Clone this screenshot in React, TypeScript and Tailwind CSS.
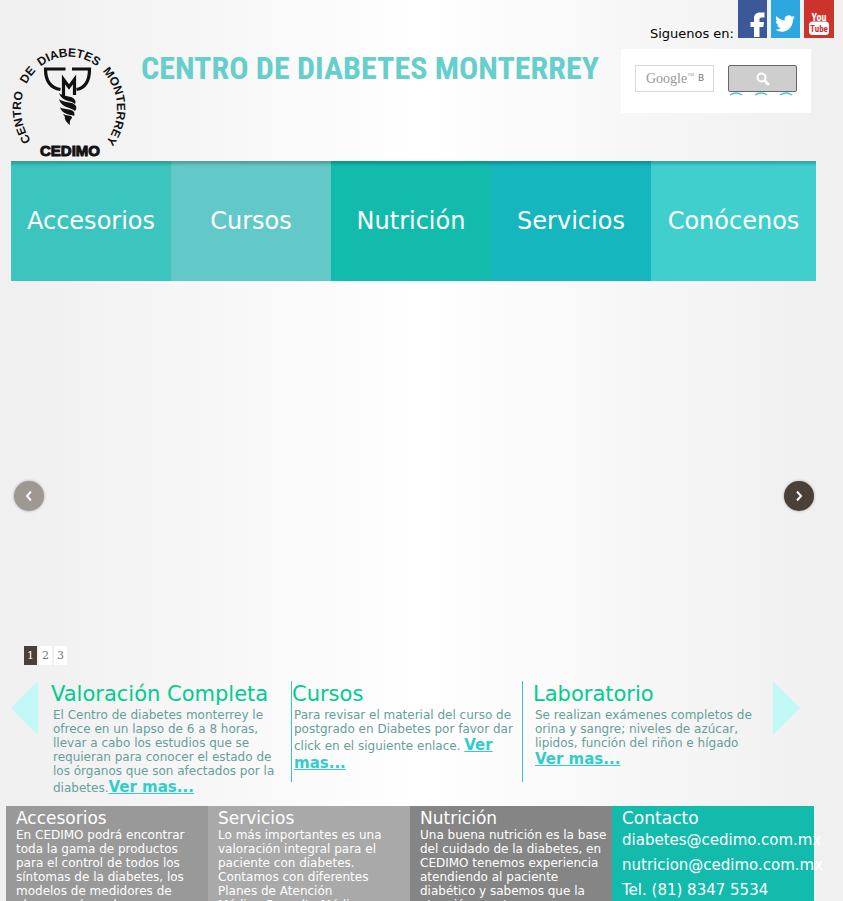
import React from "react";

const sections = [
  { name: "Accesorios", tone: "bg-[#3cc4be]" },
  { name: "Cursos", tone: "bg-[#63c9c8]" },
  { name: "Nutrición", tone: "bg-[#13bbac]" },
  { name: "Servicios", tone: "bg-[#15b6bd]" },
  { name: "Conócenos", tone: "bg-[#40cfcd]" },
];

const footer = [
  {
    title: "Accesorios",
    tone: "bg-[#999999]",
    text: "En CEDIMO podrá encontrar toda la gama de productos para el control de todos los síntomas de la diabetes, los modelos de medidores de glucosa más cada vez",
  },
  {
    title: "Servicios",
    tone: "bg-[#a9a9a9]",
    text: "Lo más importantes es una valoración integral para el paciente con diabetes. Contamos con diferentes Planes de Atención\nMédica Consulta Médica",
  },
  {
    title: "Nutrición",
    tone: "bg-[#858585]",
    text: "Una buena nutrición es la base del cuidado de la diabetes, en CEDIMO tenemos experiencia atendiendo al paciente diabético y sabemos que la atención oportuna",
  },
];

const ringWords = [
  { word: "CENTRO", at: 3 },
  { word: "DE", at: 62 },
  { word: "DIABETES", at: 85 },
  { word: "MONTERREY", at: 153 },
];

function Logo() {
  return (
    <svg viewBox="0 0 120 120" className="h-[120px] w-[120px] overflow-visible" role="img" aria-label="CEDIMO">
      <defs>
        <path id="ring" d="M24 102A48 52 0 1 1 96 102" />
      </defs>
      {ringWords.map((w) => (
        <text key={w.word} className="font-['Liberation_Sans'] text-[12px] font-bold" fill="#111">
          <textPath href="#ring" startOffset={w.at}>{w.word}</textPath>
        </text>
      ))}
      <g fill="none" stroke="#111" strokeWidth="3.200">
        <path d="M56.500 28H36.500C36.500 40 42 47 51.500 48.500" />
        <path d="M63 28H80.500C80.500 40 76 47 67.500 48.500" />
        <path d="M54.500 56V38.500L60 46L65.500 38.500V54" />
      </g>
      <g fill="#111">
        <path d="M50 52C54 56 63 54 66 59C67 61 66 63 66 63C62 59 53 61 50 52Z" />
        <path d="M50 58C54 62 64 60 67 65C68 68 66 70 66 70C62 66 52 67 50 58Z" />
        <path d="M51 66C54 69 62 67 65 71C66 73 65 75 65 75C61 73 53 74 51 66Z" />
        <path d="M54 73C57 75 62 74 63 76C63 78 60 79 61 84C58 82 55 78 56 76Z" />
      </g>
      <text x="61" y="115" textAnchor="middle" className="font-['Liberation_Sans'] text-[15px] font-bold" fill="#111" stroke="#111" strokeWidth="1">CEDIMO</text>
    </svg>
  );
}

function Social() {
  return (
    <div className="flex h-[38px] gap-[4px]">
      <span className="pt-[26px] text-[13px] leading-4">Siguenos en:</span>
      <a href="#facebook" aria-label="Facebook">
        <svg viewBox="0 0 29 38" className="h-[38px] w-[29px]">
          <path fill="#3b5998" d="M0 0h29v38H0z" />
          <path fill="#fff" d="M16 37V27h-3.500v-5H16v-3.500c0-4 2.500-6 6-6h4.500v5h-3c-1.500 0-2 .7-2 2V22H26l-.7 5h-3.800v10z" />
        </svg>
      </a>
      <a href="#twitter" aria-label="Twitter">
        <svg viewBox="0 0 29 38" className="h-[38px] w-[29px]">
          <path fill="#2ca7df" d="M0 0h29v38H0z" />
          <path fill="#fff" d="M24 17.200c-.8.400-1.600.6-2.300.7.800-.5 1.400-1.300 1.700-2.200-.8.500-1.700.8-2.600 1a4.100 4.100 0 0 0-7 3.700c-3.400-.2-6.400-1.800-8.400-4.300-1.100 1.900-.6 4.300 1.300 5.500-.7 0-1.300-.2-1.900-.5 0 2 1.400 3.700 3.300 4.100-.6.200-1.200.2-1.900.1.500 1.600 2 2.800 3.900 2.800A8.200 8.200 0 0 1 4.500 29.800c8.500 5 17.500-.8 17.500-10.400.8-.6 1.500-1.300 2-2.200z" />
        </svg>
      </a>
      <a href="#youtube" aria-label="YouTube">
        <svg viewBox="0 0 30 38" className="h-[38px] w-[30px]">
          <path fill="#cd332d" d="M0 0h30v38H0z" />
          <rect x="5" y="21.500" width="20" height="13.500" rx="3.500" fill="#fff" />
          <text x="15" y="20.500" textAnchor="middle" fill="#fff" className="font-['Roboto_Condensed'] text-[10px] font-bold">You</text>
          <text x="15" y="32" textAnchor="middle" fill="#cd332d" className="font-['Roboto_Condensed'] text-[9px] font-bold">Tube</text>
        </svg>
      </a>
    </div>
  );
}

function Search() {
  return (
    <form className="flex h-16 w-[190px] items-start gap-[14px] bg-white px-[14px] pt-4" onSubmit={(e) => e.preventDefault()}>
      <label className="flex h-[27px] w-[79px] items-center gap-1 border border-[#d9d9d9] pl-[10px]">
        <span className="flex font-['Liberation_Serif'] text-[14px] leading-4 text-[#999]">
          Google<span className="text-[7px] leading-[10px]">™</span>
        </span>
        <input aria-label="Buscar" defaultValue="B" className="w-3 min-w-0 bg-transparent text-[9px] text-[#777] outline-none" />
      </label>
      <div>
        <button aria-label="Buscar" className="flex h-[27px] w-[69px] items-center justify-center rounded-[2px] border border-[#666] bg-[#cecece]">
          <svg viewBox="0 0 14 14" className="h-[14px] w-[14px]" fill="none" stroke="#fff" strokeWidth="2">
            <circle cx="5.500" cy="5.500" r="4" />
            <path d="M8.500 8.500L13 13" strokeWidth="2.500" />
          </svg>
        </button>
        <svg viewBox="0 0 69 4" className="h-1 w-[69px]" fill="none" stroke="#4cc5c1" strokeWidth="1.500">
          <path d="M2 3Q8-1 14 3M27 3Q33-1 39 3M52 3Q58-1 64 3" />
        </svg>
      </div>
    </form>
  );
}

function More() {
  return (
    <a href="#mas" className="text-[15px] leading-[18px] font-bold text-[#33cccc] underline">
      Ver mas...
    </a>
  );
}

function Arrow({ left }: { left?: boolean }) {
  return (
    <button aria-label={left ? "Anterior" : "Siguiente"} className="h-[54px] w-[27px] shrink-0">
      <svg viewBox="0 0 27 54" className="h-full w-full" fill="#c2f8f5">
        <path d={left ? "M27 0V54L0 27Z" : "M0 0V54L27 27Z"} />
      </svg>
    </button>
  );
}

function RoundArrow({ left }: { left?: boolean }) {
  return (
    <button
      aria-label={left ? "Imagen anterior" : "Imagen siguiente"}
      className={`flex h-[30px] w-[30px] items-center justify-center rounded-full shadow-[0_0_3px_#0005] ${left ? "bg-[#9e9893]" : "bg-[#4b4037]"}`}
    >
      <svg viewBox="0 0 8 10" className="h-[10px] w-2" fill="none" stroke="#fff" strokeWidth="2">
        <path d={left ? "M6 .5L2 5L6 9.500" : "M2 .5L6 5L2 9.500"} />
      </svg>
    </button>
  );
}

export default function App() {
  return (
    <div className="h-screen overflow-hidden bg-linear-to-r from-[#f0f0f0] from-3% via-white to-[#f0f0f0] to-97% font-['DejaVu_Sans',sans-serif] text-black">
      <header className="flex h-[161px] pl-[9px]">
        <div className="w-[120px] pt-[41px]">
          <Logo />
        </div>
        <h1 className="flex-1 pt-[46px] pl-3 font-['Roboto_Condensed','Liberation_Sans_Narrow',sans-serif] text-[32px] leading-[44px] font-bold whitespace-nowrap text-[#66cecb]">
          CENTRO DE DIABETES MONTERREY
        </h1>
        <div className="flex flex-col items-end gap-[11px] pr-[9px]">
          <Social />
          <div className="pr-[23px]">
            <Search />
          </div>
        </div>
      </header>

      <nav className="mr-[27px] ml-[11px] grid h-[120px] grid-cols-[repeat(4,160fr)_165fr] bg-[#13bbac]">
        {sections.map((s) => (
          <a key={s.name} href="#seccion" className={`flex items-center justify-center text-2xl text-white shadow-[inset_0_5px_3px_-2px_#0003] ${s.tone}`}>
            {s.name}
          </a>
        ))}
      </nav>

      <section className="mr-[29px] ml-[14px] flex h-[384px] flex-col justify-end">
        <div className="flex justify-between pb-[135px]">
          <RoundArrow left />
          <RoundArrow />
        </div>
        <div className="flex gap-[2px] pl-[10px] font-['DejaVu_Serif',serif] text-[11px] leading-[19px]">
          <button className="w-[13px] bg-[#4b4037] text-white">1</button>
          <button className="w-[13px] bg-white text-[#777]">2</button>
          <button className="w-[13px] bg-white text-[#777]">3</button>
        </div>
      </section>

      <section className="mt-4 mr-[43px] ml-[11px] flex h-[125px] text-xs leading-[14px] text-[#669f99]">
        <Arrow left />
        <article className="w-[253px] pl-[13px]">
          <h2 className="text-[21px] leading-[27px] text-[#00cc8f]">Valoración Completa</h2>
          <p className="w-[225px] pl-[2px]">
            El Centro de diabetes monterrey le ofrece en un lapso de 6 a 8 horas, llevar a cabo los estudios que se requieran para conocer el estado de los órganos que son afectados por la diabetes.
            <More />
          </p>
        </article>
        <article className="h-[101px] w-[231px] border-l border-[#3cc4be]">
          <h2 className="text-[21px] leading-[27px] text-[#00cc8f]">Cursos</h2>
          <p className="w-[223px] pl-[2px]">
            Para revisar el material del curso de postgrado en Diabetes por favor dar click en el siguiente enlace. <More />
          </p>
        </article>
        <article className="h-[101px] flex-1 border-l border-[#3cc4be] pl-[10px]">
          <h2 className="text-[21px] leading-[27px] text-[#00cc8f]">Laboratorio</h2>
          <p className="w-[222px] pl-[2px]">
            Se realizan exámenes completos de orina y sangre; niveles de azúcar, lipidos, función del riñon e hígado <More />
          </p>
        </article>
        <Arrow />
      </section>

      <footer className="mr-[29px] ml-[6px] grid h-[200px] grid-cols-4 text-xs leading-[14px] text-white">
        {footer.map((f) => (
          <section key={f.title} className={`pt-[2px] pl-[10px] ${f.tone}`}>
            <h3 className="text-[17px] leading-5">{f.title}</h3>
            <p className="pr-1 whitespace-pre-line">{f.text}</p>
          </section>
        ))}
        <section className="bg-[#13bbac] pt-[2px] pl-[10px]">
          <h3 className="text-[17px] leading-5">Contacto</h3>
          <address className="flex flex-col text-[15px] leading-[25px] whitespace-nowrap not-italic">
            <a href="mailto:diabetes@cedimo.com.mx">diabetes@cedimo.com.mx</a>
            <a href="mailto:nutricion@cedimo.com.mx">nutricion@cedimo.com.mx</a>
            <span>Tel. (81) 8347 5534</span>
          </address>
        </section>
      </footer>
    </div>
  );
}
